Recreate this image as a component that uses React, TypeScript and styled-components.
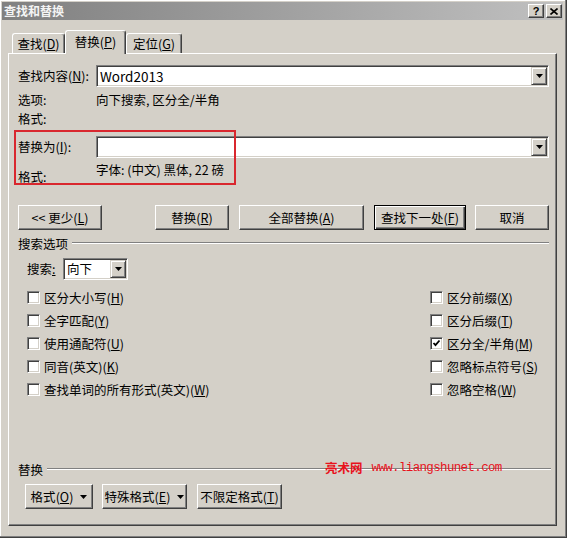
import React from "react"
import styled, { createGlobalStyle } from "styled-components"

const GlobalStyle = createGlobalStyle`
    html, body {
        margin: 0;
        padding: 0;
        background: #d4d0c8;
    }
    body {
        font-family: "Noto Sans CJK SC", "Liberation Sans", sans-serif;
        font-size: 12.5px;
        color: #000;
    }
    u {
        text-underline-offset: 1px;
    }
`

const Window = styled.div`
    position: relative;
    width: 567px;
    height: 538px;
    box-sizing: border-box;
    background: #d4d0c8;
    border-right: 1px solid #404040;
    border-bottom: 1px solid #404040;
    box-shadow: inset -1px -1px #808080, inset 1px 1px #fff;
    padding: 2px 3px 0 2px;
`

const TitleBar = styled.div`
    height: 18px;
    display: flex;
    align-items: center;
    justify-content: space-between;
    background: linear-gradient(to right, #808080, #c0c0c0);
    padding-left: 2px;
`

const Title = styled.span`
    color: #f4f4f4;
    font-weight: bold;
    font-size: 12px;
    line-height: 18px;
`

const TitleButtons = styled.div`
    display: flex;
    gap: 2px;
    margin-right: 1px;
`

const TitleButton = styled.div`
    width: 16px;
    height: 14px;
    box-sizing: border-box;
    background: #d4d0c8;
    border: 1px solid;
    border-color: #fff #404040 #404040 #fff;
    box-shadow: inset -1px -1px #808080;
    display: flex;
    align-items: center;
    justify-content: center;
    font-family: "Liberation Sans", sans-serif;
    font-weight: bold;
    font-size: 11px;
    line-height: 12px;
`

const Body = styled.div`
    padding: 10px 0 0 6px;
`

const TabStrip = styled.div`
    display: flex;
    align-items: flex-end;
    height: 23px;
    padding-left: 4px;
`

const Tab = styled.div<{ $active?: boolean; $w: number }>`
    position: relative;
    z-index: ${(p) => (p.$active ? 2 : 0)};
    width: ${(p) => p.$w}px;
    height: ${(p) => (p.$active ? 24 : 20)}px;
    margin-bottom: ${(p) => (p.$active ? -1 : 0)}px;
    box-sizing: border-box;
    background: #d4d0c8;
    border-top: 1px solid #fff;
    border-left: 1px solid #fff;
    border-right: 1px solid #404040;
    border-radius: 3px 3px 0 0;
    box-shadow: inset -1px 0 #808080;
    display: flex;
    align-items: center;
    justify-content: center;
    padding-bottom: ${(p) => (p.$active ? 3 : 0)}px;
`

const Panel = styled.div`
    position: relative;
    width: 549px;
    height: 473px;
    box-sizing: border-box;
    border-top: 1px solid #fff;
    border-left: 1px solid #fff;
    border-right: 1px solid #404040;
    border-bottom: 1px solid #404040;
    box-shadow: inset -1px -1px #808080;
    padding: 11px 7px 0 9px;
    display: flex;
    flex-direction: column;
`

const Highlight = styled.div`
    position: absolute;
    left: 5px;
    top: 76px;
    width: 222px;
    height: 55px;
    box-sizing: border-box;
    border: 2px solid #d9272e;
    pointer-events: none;
`

const FormRow = styled.div<{ $mt?: number; $h: number }>`
    display: grid;
    grid-template-columns: 78px 1fr;
    margin-top: ${(p) => p.$mt ?? 0}px;
    height: ${(p) => p.$h}px;
`

const Label = styled.span<{ $end?: boolean }>`
    line-height: 18px;
    align-self: ${(p) => (p.$end ? "end" : "center")};
    white-space: nowrap;
`

const Value = styled.span<{ $start?: boolean }>`
    line-height: 18px;
    align-self: ${(p) => (p.$start ? "start" : "center")};
    white-space: nowrap;
`

const Combo = styled.div<{ $w?: number }>`
    height: 22px;
    width: ${(p) => (p.$w ? `${p.$w}px` : "auto")};
    box-sizing: border-box;
    background: #fff;
    border: 1px solid;
    border-color: #808080 #fff #fff #808080;
    box-shadow: inset 1px 1px #404040, inset -1px -1px #d4d0c8;
    display: flex;
    align-items: center;
    justify-content: space-between;
    padding: 1px 1px 1px 3px;
`

const ComboText = styled.span<{ $latin?: boolean }>`
    font-size: ${(p) => (p.$latin ? 13.5 : 12.5)}px;
    line-height: 18px;
`

const DropButton = styled.div`
    width: 16px;
    height: 18px;
    box-sizing: border-box;
    background: #d4d0c8;
    border: 1px solid;
    border-color: #d4d0c8 #404040 #404040 #d4d0c8;
    box-shadow: inset 1px 1px #fff, inset -1px -1px #808080;
    display: flex;
    align-items: center;
    justify-content: center;
`

const ButtonRow = styled.div<{ $mt: number; $pl?: number }>`
    display: flex;
    margin-top: ${(p) => p.$mt}px;
    padding-left: ${(p) => p.$pl ?? 0}px;
    height: 25px;
`

const ButtonGroup = styled.div`
    display: flex;
    margin-left: auto;
`

const Button = styled.div<{ $w: number; $default?: boolean; $ml?: number }>`
    width: ${(p) => p.$w}px;
    height: 25px;
    margin-left: ${(p) => p.$ml ?? 0}px;
    box-sizing: border-box;
    background: #d4d0c8;
    border: 1px solid;
    border-color: ${(p) => (p.$default ? "#000" : "#fff #404040 #404040 #fff")};
    box-shadow: ${(p) =>
        p.$default
            ? "inset 1px 1px #fff, inset -1px -1px #404040, inset -2px -2px #808080"
            : "inset -1px -1px #808080"};
    display: flex;
    align-items: center;
    justify-content: center;
    gap: 7px;
    white-space: nowrap;
    line-height: 18px;
`

const GroupHeader = styled.div<{ $mt: number }>`
    display: flex;
    align-items: center;
    gap: 4px;
    height: 16px;
    margin-top: ${(p) => p.$mt}px;
`

const Rule = styled.div<{ $extend?: number }>`
    position: relative;
    flex: 1;
    height: 0;
    border-top: 1px solid #808080;
    border-bottom: 1px solid #fff;
    margin-right: -${(p) => p.$extend ?? 0}px;
`

const Watermark = styled.span`
    position: absolute;
    left: 278px;
    top: -9px;
    color: #e8121c;
    white-space: nowrap;
    line-height: 16px;
    display: flex;
    align-items: center;
    gap: 9px;
`

const WatermarkCn = styled.span`
    font-size: 12.5px;
    font-weight: bold;
`

const WatermarkUrl = styled.span`
    font-family: "Liberation Mono", monospace;
    font-size: 12.5px;
    letter-spacing: -0.65px;
`

const SearchRow = styled.div`
    display: flex;
    align-items: center;
    margin-top: 7px;
    padding-left: 9px;
    height: 22px;
`

const SearchLabel = styled.span`
    width: 36px;
    line-height: 18px;
`

const CheckGrid = styled.div`
    display: grid;
    grid-template-columns: 403px auto;
    grid-template-rows: repeat(5, 23px);
    grid-auto-flow: column;
    margin-top: 6px;
    padding-left: 9px;
`

const CheckItem = styled.label`
    display: flex;
    align-items: center;
    gap: 4px;
    white-space: nowrap;
    line-height: 18px;
`

const Box = styled.span`
    width: 13px;
    height: 13px;
    box-sizing: border-box;
    background: #fff;
    border: 1px solid;
    border-color: #808080 #fff #fff #808080;
    box-shadow: inset 1px 1px #404040, inset -1px -1px #d4d0c8;
    display: flex;
    align-items: center;
    justify-content: center;
`

const Arrow = () => (
    <svg width="7" height="4" viewBox="0 0 7 4">
        <path d="M0 0h7L3.5 4z" fill="#000" />
    </svg>
)

const Check = () => (
    <svg width="9" height="9" viewBox="0 0 9 9">
        <path d="M1.5 4l2 2.2L7.5 1.5" stroke="#000" strokeWidth="1.8" fill="none" />
    </svg>
)

const Mn = ({ k }: { k: string }) => (
    <>
        (<u>{k}</u>)
    </>
)

interface IOption {
    text: string
    key: string
    checked?: boolean
}

const options: IOption[] = [
    { text: "区分大小写", key: "H" },
    { text: "全字匹配", key: "Y" },
    { text: "使用通配符", key: "U" },
    { text: "同音(英文)", key: "K" },
    { text: "查找单词的所有形式(英文)", key: "W" },
    { text: "区分前缀", key: "X" },
    { text: "区分后缀", key: "T" },
    { text: "区分全/半角", key: "M", checked: true },
    { text: "忽略标点符号", key: "S" },
    { text: "忽略空格", key: "W" },
]

const App = () => {
    return (
        <Window>
            <GlobalStyle />
            <TitleBar>
                <Title>查找和替换</Title>
                <TitleButtons>
                    <TitleButton>?</TitleButton>
                    <TitleButton>
                        <svg width="8" height="7" viewBox="0 0 8 7">
                            <path d="M0.5 0.5l7 6M7.5 0.5l-7 6" stroke="#000" strokeWidth="1.6" />
                        </svg>
                    </TitleButton>
                </TitleButtons>
            </TitleBar>
            <Body>
                <TabStrip>
                    <Tab $w={53}>
                        <span>
                            查找<Mn k="D" />
                        </span>
                    </Tab>
                    <Tab $w={61} $active>
                        <span>
                            替换<Mn k="P" />
                        </span>
                    </Tab>
                    <Tab $w={56}>
                        <span>
                            定位<Mn k="G" />
                        </span>
                    </Tab>
                </TabStrip>
                <Panel>
                    <FormRow $h={22}>
                        <Label>
                            查找内容<Mn k="N" />:
                        </Label>
                        <Combo>
                            <ComboText $latin>Word2013</ComboText>
                            <DropButton>
                                <Arrow />
                            </DropButton>
                        </Combo>
                    </FormRow>
                    <FormRow $mt={4} $h={18}>
                        <Label>选项:</Label>
                        <Value>向下搜索, 区分全/半角</Value>
                    </FormRow>
                    <FormRow $mt={1} $h={18}>
                        <Label>格式:</Label>
                        <Value />
                    </FormRow>
                    <FormRow $mt={8} $h={22}>
                        <Label>
                            替换为<Mn k="I" />:
                        </Label>
                        <Combo>
                            <ComboText />
                            <DropButton>
                                <Arrow />
                            </DropButton>
                        </Combo>
                    </FormRow>
                    <FormRow $mt={3} $h={25}>
                        <Label $end>格式:</Label>
                        <Value $start>字体: (中文) 黑体, 22 磅</Value>
                    </FormRow>

                    <ButtonRow $mt={19}>
                        <Button $w={84}>
                            <span>
                                {"<< "}更少<Mn k="L" />
                            </span>
                        </Button>
                        <ButtonGroup>
                            <Button $w={74}>
                                <span>
                                    替换<Mn k="R" />
                                </span>
                            </Button>
                            <Button $w={125} $ml={10}>
                                <span>
                                    全部替换<Mn k="A" />
                                </span>
                            </Button>
                            <Button $w={92} $ml={10} $default>
                                <span>
                                    查找下一处<Mn k="F" />
                                </span>
                            </Button>
                            <Button $w={74} $ml={9}>
                                <span>取消</span>
                            </Button>
                        </ButtonGroup>
                    </ButtonRow>

                    <GroupHeader $mt={5}>
                        <span>搜索选项</span>
                        <Rule />
                    </GroupHeader>
                    <SearchRow>
                        <SearchLabel>
                            搜索<u>:</u>
                        </SearchLabel>
                        <Combo $w={65}>
                            <ComboText>向下</ComboText>
                            <DropButton>
                                <Arrow />
                            </DropButton>
                        </Combo>
                    </SearchRow>
                    <CheckGrid>
                        {options.map((o, i) => (
                            <CheckItem key={i}>
                                <Box>{o.checked && <Check />}</Box>
                                <span>
                                    {o.text}
                                    <Mn k={o.key} />
                                </span>
                            </CheckItem>
                        ))}
                    </CheckGrid>

                    <GroupHeader $mt={60}>
                        <span>替换</span>
                        <Rule $extend={2}>
                            <Watermark>
                                <WatermarkCn>亮术网</WatermarkCn>
                                <WatermarkUrl>www.liangshunet.com</WatermarkUrl>
                            </Watermark>
                        </Rule>
                    </GroupHeader>
                    <ButtonRow $mt={7} $pl={7}>
                        <Button $w={68}>
                            <span>
                                格式<Mn k="O" />
                            </span>
                            <Arrow />
                        </Button>
                        <Button $w={85} $ml={9}>
                            <span>
                                特殊格式<Mn k="E" />
                            </span>
                            <Arrow />
                        </Button>
                        <Button $w={85} $ml={10}>
                            <span>
                                不限定格式<Mn k="T" />
                            </span>
                        </Button>
                    </ButtonRow>
                    <Highlight />
                </Panel>
            </Body>
        </Window>
    )
}

export default App
